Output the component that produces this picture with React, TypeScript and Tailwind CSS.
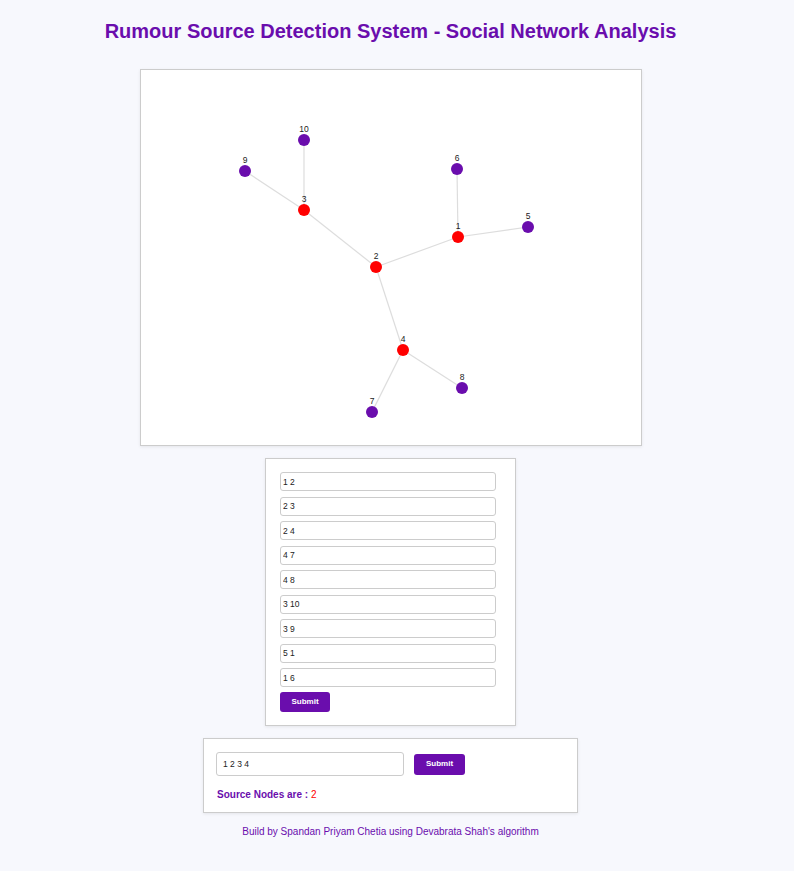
import React from "react";

const nodes: Record<string, [number, number, boolean]> = {
  "10": [163, 70, false],
  "9": [104, 101, false],
  "3": [163, 140, true],
  "2": [235, 197, true],
  "1": [317, 167, true],
  "6": [316, 99, false],
  "5": [387, 157, false],
  "4": [262, 280, true],
  "8": [321, 318, false],
  "7": [231, 342, false],
};

const edges: [string, string][] = [
  ["1", "2"],
  ["2", "3"],
  ["2", "4"],
  ["4", "7"],
  ["4", "8"],
  ["3", "10"],
  ["3", "9"],
  ["5", "1"],
  ["1", "6"],
];

const edgeInputs = ["1 2", "2 3", "2 4", "4 7", "4 8", "3 10", "3 9", "5 1", "1 6"];

export default function App() {
  return (
    <div
      className="min-h-[871px] bg-[#f7f8fd]"
      style={{ fontFamily: '"Liberation Sans", Arial, sans-serif' }}
    >
      <div className="w-[781px] flex flex-col items-center pt-[20px]">
        <h1 className="text-[20px] leading-[23px] font-bold text-[#6a0dad]">
          Rumour Source Detection System - Social Network Analysis
        </h1>

        <div className="mt-[26px] w-[502px] h-[377px] bg-white border border-[#cccccc] shadow-[0_1px_3px_rgba(0,0,0,0.08)]">
          <svg width="500" height="375" viewBox="0 0 500 375">
            {edges.map(([a, b], i) => (
              <line
                key={i}
                x1={nodes[a][0]}
                y1={nodes[a][1]}
                x2={nodes[b][0]}
                y2={nodes[b][1]}
                stroke="#dddddd"
                strokeWidth={1.2}
              />
            ))}
            {Object.entries(nodes).map(([id, [x, y, red]]) => (
              <g key={id}>
                <circle cx={x} cy={y} r={6} fill={red ? "#ff0000" : "#6a0dad"} />
                <text
                  x={x}
                  y={y - 8}
                  textAnchor="middle"
                  fontSize={8.5}
                  fill="#222"
                  fontFamily='"Liberation Sans", Arial, sans-serif'
                >
                  {id}
                </text>
              </g>
            ))}
          </svg>
        </div>

        <div className="mt-[12px] w-[251px] bg-white border border-[#cccccc] shadow-[0_1px_3px_rgba(0,0,0,0.08)] pt-[13px] pb-[13px] px-[14px] flex flex-col">
          {edgeInputs.map((v, i) => (
            <input
              key={i}
              readOnly
              value={v}
              className={`w-[216px] h-[19px] border border-[#cccccc] rounded-[3px] px-[2px] text-[8.5px] text-[#222] outline-none ${i > 0 ? "mt-[5.5px]" : ""}`}
            />
          ))}
          <button className="mt-[5px] w-[50px] h-[20px] bg-[#6a0dad] rounded-[3px] text-white text-[8px] font-bold">
            Submit
          </button>
        </div>

        <div className="mt-[12px] w-[375px] h-[75px] bg-white border border-[#cccccc] shadow-[0_1px_3px_rgba(0,0,0,0.08)] px-[12px] pt-[13px]">
          <div className="flex items-center">
            <input
              readOnly
              value="1 2 3 4"
              className="w-[188px] h-[24px] border border-[#cccccc] rounded-[3px] px-[6px] text-[8.5px] text-[#222] outline-none"
            />
            <button className="ml-[10px] w-[51px] h-[21px] bg-[#6a0dad] rounded-[3px] text-white text-[8px] font-bold">
              Submit
            </button>
          </div>
          <div className="mt-[13px] text-[10px] leading-[12px] font-bold text-[#6a0dad] pl-[1px]">
            Source Nodes are : <span className="font-normal text-[#ff0000]">2</span>
          </div>
        </div>

        <div className="mt-[13px] text-[10px] leading-[12px] text-[#6a0dad]">
          Build by Spandan Priyam Chetia using Devabrata Shah's algorithm
        </div>
      </div>
    </div>
  );
}
